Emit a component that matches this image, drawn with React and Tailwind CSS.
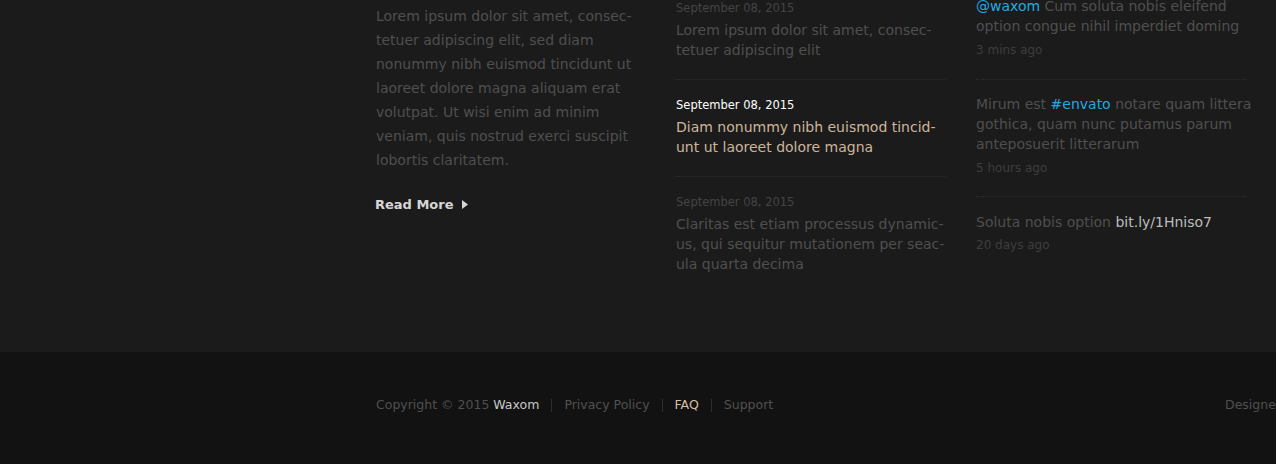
import React from "react";

const font = { fontFamily: '"DejaVu Sans", "Open Sans", sans-serif' };

function Lines({ lines, className }) {
  return (
    <div className={className}>
      {lines.map((l, i) => (
        <div key={i} className="whitespace-nowrap">
          {l}
        </div>
      ))}
    </div>
  );
}

const posts = [
  {
    date: "September 08, 2015",
    lines: ["Lorem ipsum dolor sit amet, consec-", "tetuer adipiscing elit"],
    active: false,
  },
  {
    date: "September 08, 2015",
    lines: ["Diam nonummy nibh euismod tincid-", "unt ut laoreet dolore magna"],
    active: true,
  },
  {
    date: "September 08, 2015",
    lines: [
      "Claritas est etiam processus dynamic-",
      "us, qui sequitur mutationem per seac-",
      "ula quarta decima",
    ],
    active: false,
  },
];

export default function App() {
  return (
    <div className="w-[1276px] h-[464px] overflow-hidden bg-[#1b1b1b]" style={font}>
      <div className="h-[352px] flex pl-[376px]">
        <div className="w-[270px] pt-[4px]">
          <Lines
            className="text-[14px] leading-[24px] text-[#4f4f4f]"
            lines={[
              "Lorem ipsum dolor sit amet, consec-",
              "tetuer adipiscing elit, sed diam",
              "nonummy nibh euismod tincidunt ut",
              "laoreet dolore magna aliquam erat",
              "volutpat. Ut wisi enim ad minim",
              "veniam, quis nostrud exerci suscipit",
              "lobortis claritatem.",
            ]}
          />
          <div className="mt-[23px] -ml-px flex items-center gap-[8px] text-[13px] font-semibold text-[#d6d6d6]">
            <span>Read More</span>
            <svg width="6" height="9" viewBox="0 0 6 9">
              <path d="M0 0 L6 4.5 L0 9 Z" fill="#d6d6d6" />
            </svg>
          </div>
        </div>

        <div className="w-[270px] ml-[30px]">
          {posts.map((p, i) => (
            <div
              key={i}
              className={
                i < posts.length - 1
                  ? "border-b border-dotted border-[#2e2e2e] pb-[19px] mb-[17px]"
                  : ""
              }
            >
              <div
                className={
                  "text-[11.5px] leading-[16px] " +
                  (p.active ? "text-white" : "text-[#444444]")
                }
              >
                {p.date}
              </div>
              <Lines
                className={
                  "text-[14px] leading-[20px] mt-[4px] " +
                  (p.active ? "text-[#cdb59c]" : "text-[#4f4f4f]")
                }
                lines={p.lines}
              />
            </div>
          ))}
        </div>

        <div className="w-[270px] ml-[30px] mt-[-4px]">
          <div className="border-b border-dotted border-[#2e2e2e] pb-[21px] mb-[14px]">
            <div className="text-[14px] leading-[20px] text-[#4f4f4f]">
              <div className="whitespace-nowrap">
                <span className="text-[#22a9e1]">@waxom</span> Cum soluta nobis eleifend
              </div>
              <div className="whitespace-nowrap">option congue nihil imperdiet doming</div>
            </div>
            <div className="text-[12px] leading-[16px] mt-[6px] text-[#3e3e3e]">3 mins ago</div>
          </div>
          <div className="border-b border-dotted border-[#2e2e2e] pb-[20px] mb-[15px]">
            <div className="text-[14px] leading-[20px] text-[#4f4f4f]">
              <div className="whitespace-nowrap">
                Mirum est <span className="text-[#22a9e1]">#envato</span> notare quam littera
              </div>
              <div className="whitespace-nowrap">gothica, quam nunc putamus parum</div>
              <div className="whitespace-nowrap">anteposuerit litterarum</div>
            </div>
            <div className="text-[12px] leading-[16px] mt-[6px] text-[#3e3e3e]">5 hours ago</div>
          </div>
          <div>
            <div className="text-[14px] leading-[20px] text-[#4f4f4f] whitespace-nowrap">
              Soluta nobis option <span className="text-[#bdbdbd]">bit.ly/1Hniso7</span>
            </div>
            <div className="text-[12px] leading-[16px] mt-[5px] text-[#3e3e3e]">20 days ago</div>
          </div>
        </div>
      </div>

      <div className="h-[112px] bg-[#121212] flex items-center pl-[376px] pb-[6px]">
        <div className="w-[849px] shrink-0 flex items-center text-[12.5px] text-[#505050] whitespace-nowrap">
          <span>
            Copyright © 2015 <span className="text-[#c8c8c8]">Waxom</span>
          </span>
          <span className="mx-[12px] h-[13px] w-px bg-[#2e2e2e]" />
          <span>Privacy Policy</span>
          <span className="mx-[12px] h-[13px] w-px bg-[#2e2e2e]" />
          <span className="text-[#d8bea2]">FAQ</span>
          <span className="mx-[12px] h-[13px] w-px bg-[#2e2e2e]" />
          <span>Support</span>
        </div>
        <div className="shrink-0 text-[12.5px] text-[#505050] whitespace-nowrap">
          Designed by
        </div>
      </div>
    </div>
  );
}
